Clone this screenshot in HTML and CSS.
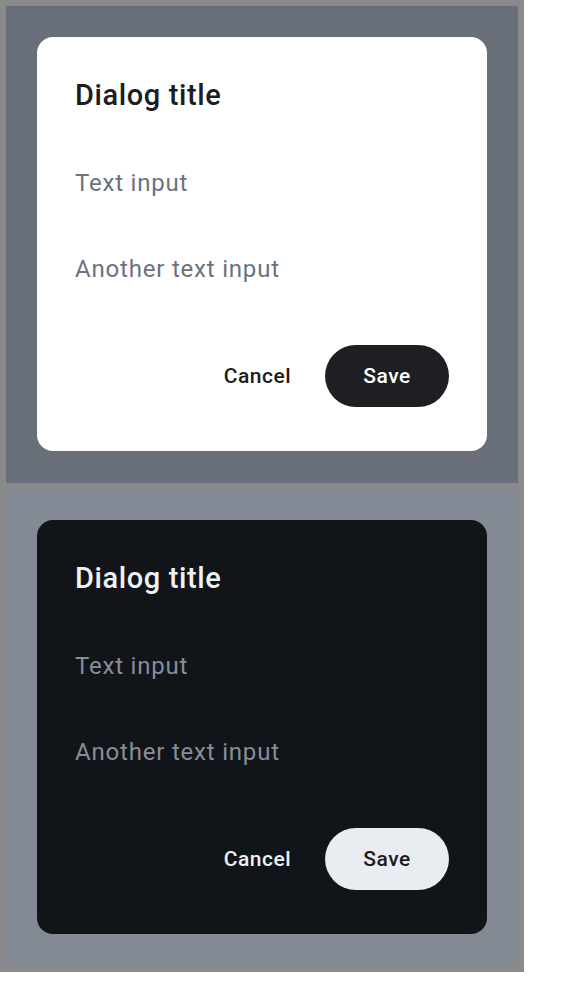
FILE: index.html
```html
<!DOCTYPE html>
<html lang="en">
<head>
<meta charset="utf-8">
<title>Dialogs</title>
<link rel="stylesheet" href="styles.css">
</head>
<body>
<div class="frame">
  <section class="panel panel-light">
    <div class="dialog dialog-light">
      <h2 class="dialog-title">Dialog title</h2>
      <div class="field">Text input</div>
      <div class="field">Another text input</div>
      <div class="actions">
        <button class="btn btn-text">Cancel</button>
        <button class="btn btn-filled">Save</button>
      </div>
    </div>
  </section>
  <section class="panel panel-dark">
    <div class="dialog dialog-dark">
      <h2 class="dialog-title">Dialog title</h2>
      <div class="field">Text input</div>
      <div class="field">Another text input</div>
      <div class="actions">
        <button class="btn btn-text">Cancel</button>
        <button class="btn btn-filled">Save</button>
      </div>
    </div>
  </section>
</div>
</body>
</html>
```

FILE: styles.css
```css
* { box-sizing: border-box; }

body {
  margin: 0;
  background: #ffffff;
  font-family: Roboto, "Liberation Sans", sans-serif;
}

.frame {
  width: 524px;
  padding: 6px;
  background: #8a8a8a;
  display: flex;
  flex-direction: column;
  gap: 6px;
}

.panel {
  height: 477px;
  padding: 31px 31px 32px 31px;
}

.panel-light { background: #686f79; }
.panel-dark { background: #838a94; }

.dialog {
  width: 450px;
  height: 414px;
  border-radius: 16px;
  padding: 40px 38px 44px 38px;
  display: flex;
  flex-direction: column;
}

.dialog-light { background: #ffffff; }
.dialog-dark { background: #111419; }

.dialog-title {
  margin: 0;
  font-size: 29px;
  line-height: 36px;
  font-weight: 500;
  letter-spacing: 0.6px;
}

.field {
  margin-top: 54px;
  font-size: 24px;
  line-height: 32px;
  font-weight: 400;
  letter-spacing: 0.8px;
}

.actions {
  margin-top: auto;
  display: flex;
  justify-content: flex-end;
  align-items: center;
  gap: 34px;
}

.btn {
  border: none;
  font-family: Roboto, "Liberation Sans", sans-serif;
  font-size: 21px;
  font-weight: 500;
  letter-spacing: 0.5px;
  height: 62px;
  padding: 0;
  background: transparent;
}

.btn-filled {
  width: 124px;
  border-radius: 31px;
}

.dialog-light .dialog-title { color: #1c1d21; }
.dialog-light .field { color: #6b727c; }
.dialog-light .btn-text { color: #1c1d21; }
.dialog-light .btn-filled { background: #1e1f23; color: #ffffff; }

.dialog-dark .dialog-title { color: #eef0f4; }
.dialog-dark .field { color: #878e98; }
.dialog-dark .btn-text { color: #eef0f4; }
.dialog-dark .btn-filled { background: #e9ecf1; color: #1c1d21; }
```
